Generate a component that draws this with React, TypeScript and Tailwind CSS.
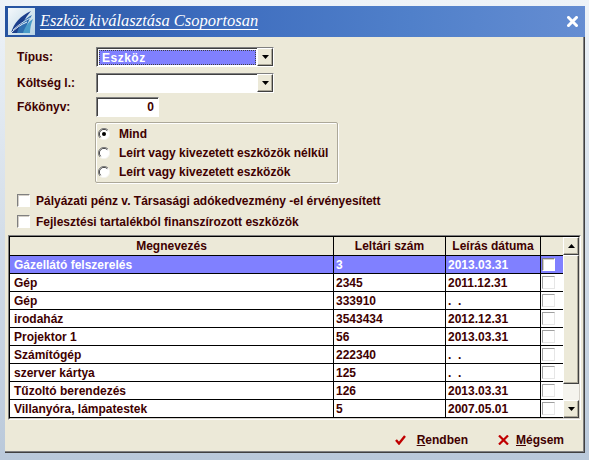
import React from 'react';

const rows = [
  { name: 'Gázellátó felszerelés', inv: '3', date: '2013.03.31' },
  { name: 'Gép', inv: '2345', date: '2011.12.31' },
  { name: 'Gép', inv: '333910', date: '.  .' },
  { name: 'irodaház', inv: '3543434', date: '2012.12.31' },
  { name: 'Projektor 1', inv: '56', date: '2013.03.31' },
  { name: 'Számítógép', inv: '222340', date: '.  .' },
  { name: 'szerver kártya', inv: '125', date: '.  .' },
  { name: 'Tűzoltó berendezés', inv: '126', date: '2013.03.31' },
  { name: 'Villanyóra, lámpatestek', inv: '5', date: '2007.05.01' },
];

const btn3d =
  'bg-[#ece9d8] border border-t-white border-l-white border-b-[#404040] border-r-[#404040] shadow-[inset_-1px_-1px_0_#aca899]';

function Arrow({ up }: { up?: boolean }) {
  return (
    <svg width="7" height="4" viewBox="0 0 7 4">
      <path d={up ? 'M0 4 L3.5 0 L7 4 Z' : 'M0 0 L7 0 L3.5 4 Z'} fill="#000" />
    </svg>
  );
}

function Combo({ value }: { value?: string }) {
  return (
    <div className="w-[178px] h-[20px] flex bg-white border border-t-[#808080] border-l-[#808080] border-b-white border-r-white shadow-[inset_1px_1px_0_#404040]">
      <div className="flex-1 pl-[2px] pt-[2px] pb-[1px] pr-[1px]">
        {value && (
          <div className="h-full bg-[#8080ff] outline outline-1 outline-dotted outline-[#404040] -outline-offset-1 text-white text-[12px] pl-[3px] flex items-center tracking-[0.5px]">
            {value}
          </div>
        )}
      </div>
      <div className={`w-[16px] h-full flex items-center justify-center ${btn3d}`}>
        <Arrow />
      </div>
    </div>
  );
}

function Radio({ checked }: { checked?: boolean }) {
  return (
    <svg width="12" height="12" viewBox="0 0 12 12">
      <circle cx="6" cy="6" r="5.5" fill="#fff" />
      <path d="M10 2 A5.5 5.5 0 0 0 2 10" fill="none" stroke="#808080" strokeWidth="1" />
      <path d="M9.3 2.7 A4.5 4.5 0 0 0 2.7 9.3" fill="none" stroke="#404040" strokeWidth="1" />
      <path d="M2 10 A5.5 5.5 0 0 0 10 2" fill="none" stroke="#f4f3ee" strokeWidth="1" />
      {checked && <circle cx="6" cy="6" r="2" fill="#000" />}
    </svg>
  );
}

function Check({ faint }: { faint?: boolean }) {
  return faint ? (
    <div className="w-[13px] h-[13px] bg-white border border-t-[#a0a0a0] border-l-[#a0a0a0] border-b-[#e6e6e6] border-r-[#e6e6e6]" />
  ) : (
    <div className="w-[13px] h-[13px] bg-white border border-t-[#808080] border-l-[#808080] border-b-white border-r-white shadow-[inset_1px_1px_0_#d4d0c8]" />
  );
}

function Logo() {
  return (
    <svg width="27" height="27" viewBox="0 0 27 27">
      <defs>
        <linearGradient id="lg" x1="0" y1="0" x2="1" y2="1">
          <stop offset="0" stopColor="#f4f8fb" />
          <stop offset="1" stopColor="#b8d4e4" />
        </linearGradient>
      </defs>
      <rect width="27" height="27" fill="url(#lg)" />
      <path d="M3 25 C6 15 12 8 23 3 C17 10 13 17 11 25 Z" fill="#1c3f8c" />
      <path d="M9 25 C11 17 16 11 24 7 C20 13 18 19 17 25 Z" fill="#2f6fb0" />
      <path d="M15 25 C17 19 20 14 25 11 C23 16 22 20 22 25 Z" fill="#4a9cc8" />
      <path d="M3 25 C8 20 12 17 19 14" fill="none" stroke="#e8f2f8" strokeWidth="1" />
      <path d="M5 22 C10 17 15 14 22 10" fill="none" stroke="#e8f2f8" strokeWidth="0.8" />
    </svg>
  );
}

export default function App() {
  return (
    <div className="w-[589px] h-[460px] flex flex-col pl-[5px] pt-[6px] pr-[4px] pb-[7px] bg-[linear-gradient(180deg,#eef3f8,#bac9da)] font-['Liberation_Sans',Arial,sans-serif] font-bold text-[12px] text-[#400000] overflow-hidden">
      {/* title bar */}
      <div className="h-[31px] shrink-0 flex items-center pl-[3px] pr-[7px] bg-[linear-gradient(90deg,#2653a0,#3d6cbe_35%,#5080ca_70%,#658dd2)]">
        <Logo />
        <span className="ml-[5px] text-white text-[16.5px] font-normal italic underline underline-offset-[3px] font-['Liberation_Serif',serif]">
          Eszköz kiválasztása Csoportosan
        </span>
        <svg className="ml-auto" width="11" height="11" viewBox="0 0 11 11">
          <path d="M1.5 1.5 L9.5 9.5 M9.5 1.5 L1.5 9.5" stroke="#fff" strokeWidth="3" strokeLinecap="square" />
        </svg>
      </div>

      {/* body */}
      <div className="flex-1 flex flex-col bg-[#ece9d8] border-r border-b border-r-[#404040] border-b-[#404040] shadow-[inset_-1px_-1px_0_#808080]">
        <div className="pl-[12px] mt-[10px] flex flex-col gap-[6px]">
          <div className="flex items-center">
            <span className="w-[79px]">Típus:</span>
            <Combo value="Eszköz" />
          </div>
          <div className="flex items-center">
            <span className="w-[79px]">Költség l.:</span>
            <Combo />
          </div>
          <div className="flex items-center -mt-[2px]">
            <span className="w-[79px]">Főkönyv:</span>
            <div className="w-[63px] h-[20px] bg-white border border-t-[#808080] border-l-[#808080] border-b-white border-r-white shadow-[inset_1px_1px_0_#404040] flex items-center justify-end pr-[4px] text-[12px]">
              0
            </div>
          </div>
        </div>

        <div className="ml-[90px] mt-[5px] w-[243px] h-[61px] border border-[#aca899] shadow-[inset_1px_1px_0_#fff,1px_1px_0_#fff] rounded-[2px] pt-[1px] pl-[1px] flex flex-col">
          {[
            ['Mind', true],
            ['Leírt vagy kivezetett eszközök nélkül', false],
            ['Leírt vagy kivezetett eszközök', false],
          ].map(([label, on]) => (
            <div key={label as string} className="h-[19px] flex items-center gap-[9px] pl-[1px]">
              <Radio checked={on as boolean} />
              <span>{label as string}</span>
            </div>
          ))}
        </div>

        <div className="pl-[12px] mt-[11px] flex flex-col gap-[8px]">
          <div className="h-[13px] flex items-center gap-[6px]">
            <Check />
            <span>Pályázati pénz v. Társasági adókedvezmény -el érvényesített</span>
          </div>
          <div className="h-[13px] flex items-center gap-[6px]">
            <Check />
            <span>Fejlesztési tartalékból finanszírozott eszközök</span>
          </div>
        </div>

        {/* grid */}
        <div className="ml-[3px] mt-[7px] w-[573px] border border-t-[#808080] border-l-[#808080] border-b-white border-r-white">
          <div className="flex border border-t-[#000] border-l-[#000] border-b-[#d4d0c8] border-r-[#d4d0c8] bg-white text-[12px]">
            <div className="w-[553px] flex flex-col">
              <div className="h-[19px] flex bg-[#ece9d8] border-b border-black">
                <div className="w-[324px] border-r border-black flex items-center justify-center">Megnevezés</div>
                <div className="w-[112px] border-r border-black flex items-center justify-center">Leltári szám</div>
                <div className="w-[95px] border-r border-black flex items-center justify-center">Leírás dátuma</div>
                <div className="flex-1" />
              </div>
              {rows.map((r, i) => {
                const sel = i === 0;
                return (
                  <div
                    key={i}
                    className={`h-[18px] flex border-b border-black ${sel ? 'bg-[#8080ff] text-white' : ''}`}
                  >
                    <div className="w-[324px] border-r border-black flex items-center pl-[4px]">{r.name}</div>
                    <div className="w-[112px] border-r border-black flex items-center pl-[2px]">{r.inv}</div>
                    <div className="w-[95px] border-r border-black flex items-center pl-[2px] whitespace-pre">{r.date}</div>
                    <div className="flex-1 flex items-start pt-[2px] pl-[1px]">
                      <Check faint={!sel} />
                    </div>
                  </div>
                );
              })}
            </div>
            <div className="w-[16px] flex flex-col bg-[#f5f4ee]">
              <div className={`h-[18px] flex items-center justify-center ${btn3d}`}>
                <Arrow up />
              </div>
              <div className={`h-[129px] ${btn3d}`} />
              <div className="flex-1" />
              <div className={`h-[18px] flex items-center justify-center ${btn3d}`}>
                <Arrow />
              </div>
            </div>
          </div>
        </div>

        {/* buttons */}
        <div className="mt-[10px] h-[20px] flex items-center justify-end pr-[20px] gap-[30px] text-[12px]">
          <div className="flex items-center gap-[11px]">
            <svg width="11" height="10" viewBox="0 0 11 10">
              <path d="M1 5 L4 8.5 L10 1" fill="none" stroke="#c00000" strokeWidth="2.4" />
            </svg>
            <span>
              <span className="underline">R</span>endben
            </span>
          </div>
          <div className="flex items-center gap-[7px]">
            <svg width="11" height="10" viewBox="0 0 11 10">
              <path d="M1 0.5 L10 9.5 M10 0.5 L1 9.5" stroke="#c00000" strokeWidth="2.2" />
            </svg>
            <span>
              <span className="underline">M</span>égsem
            </span>
          </div>
        </div>
      </div>
    </div>
  );
}
